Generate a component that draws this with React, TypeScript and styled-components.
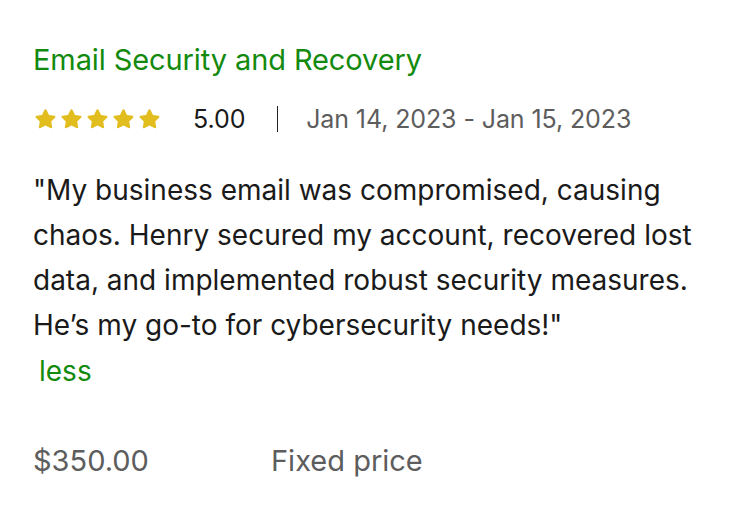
import React from "react";
import styled, { createGlobalStyle } from "styled-components";

const Global = createGlobalStyle`
  html, body { margin: 0; padding: 0; background: #fff; }
  body { font-family: Inter, "Liberation Sans", Arial, sans-serif; -webkit-font-smoothing: antialiased; }
`;

const Card = styled.article`
  width: 748px;
  box-sizing: border-box;
  padding: 42px 33px 0 33px;
  color: #1a1a1a;
`;

const Title = styled.h3`
  margin: 0;
  font-size: 29px;
  font-weight: 400;
  line-height: 36px;
  color: #138a0d;
  letter-spacing: -0.1px;
`;

const MetaRow = styled.div`
  display: flex;
  align-items: center;
  margin-top: 24px;
  height: 34px;
`;

const Stars = styled.div`
  display: flex;
  gap: 1px;
`;

const Rating = styled.span`
  font-size: 25px;
  color: #1a1a1a;
  margin-left: 31px;
`;

const Divider = styled.span`
  width: 1.5px;
  height: 26px;
  background: #222;
  margin: 0 28px 0 31px;
`;

const DateRange = styled.span`
  font-size: 25px;
  color: #5d5d5d;
  letter-spacing: -0.1px;
`;

const Quote = styled.p`
  margin: 32px 0 0 0;
  font-size: 28px;
  line-height: 45px;
  color: #1a1a1a;
  max-width: 670px;
`;

const Less = styled.button`
  display: block;
  border: 0;
  background: none;
  padding: 0 0 0 6px;
  margin-top: 3px;
  font: inherit;
  font-size: 28px;
  line-height: 40px;
  color: #138a0d;
  cursor: pointer;
`;

const PriceRow = styled.div`
  display: flex;
  align-items: center;
  margin-top: 52px;
  font-size: 29px;
  color: #5d5d5d;
`;

const Price = styled.span`
  width: 238px;
`;

const Star = () => (
  <svg width="25" height="24" viewBox="0 0 24 24" aria-hidden>
    <path
      d="M12 2.2c.5 0 .9.3 1.1.7l2.4 5 5.4.8c1 .1 1.4 1.3.7 2l-3.9 3.8.9 5.4c.2 1-.9 1.7-1.7 1.2L12 18.6l-4.9 2.5c-.9.5-1.9-.2-1.7-1.2l.9-5.4-3.9-3.8c-.7-.7-.3-1.9.7-2l5.4-.8 2.4-5c.2-.4.6-.7 1.1-.7z"
      fill="#e1bd1e"
    />
  </svg>
);

export default function App() {
  return (
    <>
      <Global />
      <Card>
        <Title>Email Security and Recovery</Title>
        <MetaRow>
          <Stars>
            {[0, 1, 2, 3, 4].map((i) => (
              <Star key={i} />
            ))}
          </Stars>
          <Rating>5.00</Rating>
          <Divider />
          <DateRange>Jan 14, 2023 - Jan 15, 2023</DateRange>
        </MetaRow>
        <Quote>
          "My business email was compromised, causing chaos. Henry secured my account, recovered lost data, and implemented robust security measures. He’s my go-to for cybersecurity needs!"
        </Quote>
        <Less>less</Less>
        <PriceRow>
          <Price>$350.00</Price>
          <span>Fixed price</span>
        </PriceRow>
      </Card>
    </>
  );
}
